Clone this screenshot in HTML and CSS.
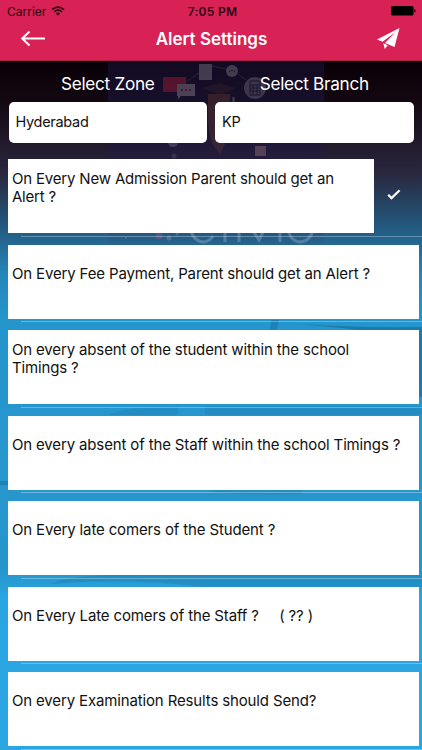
FILE: index.html
```html
<!DOCTYPE html>
<html lang="en">
<head>
  <meta charset="utf-8">
  <title>Alert Settings</title>
  <link rel="stylesheet" href="styles.css">
</head>
<body>
<div class="screen">
  <svg class="backdrop" viewBox="0 0 422 750" aria-hidden="true">
    <defs>
      <linearGradient id="night" x1="0" y1="0" x2="0" y2="1">
        <stop offset="0" stop-color="#120a22"/>
        <stop offset=".5" stop-color="#221b3e" stop-opacity=".7"/>
        <stop offset="1" stop-color="#262044" stop-opacity="0"/>
      </linearGradient>
    </defs>
    <rect x="108" y="61" width="216" height="190" fill="url(#night)"/>
    <!-- school artwork -->
    <g opacity=".4">
      <path d="M186 82l13-9M212 66l14 3M238 74l8 6" fill="none" stroke="#4a4068"/>
      <rect x="199" y="64" width="13" height="16" fill="#8a8490"/>
      <rect x="163" y="77" width="23" height="15" fill="#b81f35"/>
      <path d="M177 84h18v12h-14l-3 3v-3h-1z" fill="#9a8f9d"/>
      <path d="M181 90h10" stroke="#a81f35" stroke-width="2" stroke-dasharray="2 2"/>
      <circle cx="232" cy="71" r="6" fill="#8a8490"/>
      <path d="M229 72l3-2 3 2" fill="none" stroke="#332844"/>
      <circle cx="255" cy="88" r="11" fill="#77717f"/>
      <path d="M250 81h10v14h-10zM250 85h10M250 88h10M250 91h10M253 85v10M257 85v10" fill="none" stroke="#292033"/>
      <path d="M202 88l18-5 15 5-14 7z" fill="#38202c"/>
      <path d="M208 94h22v24q-3 32-11 32t-11-28z" fill="#60382f"/>
      <path d="M233.5 97v5" stroke="#88808c" stroke-width="2"/>
      <path d="M168 143h10q-1 4-5 4t-5-4z" fill="#777080"/>
      <rect x="255" y="146" width="11" height="10" fill="#a07b86"/>
      <circle cx="174" cy="156" r="2.5" fill="#5a536a"/>
      <path d="M214 143h11l-5 12z" fill="#5c3840"/>
    </g>
    <!-- lower edge of the logo -->
    <g fill="none" stroke="#b8cbe0" stroke-width="3" opacity=".3">
      <path d="M190 229q4 13 14 13q6-1 9-6M225 232v10M239 232v10M251 228l8 12 6-12M280 228v14M288 230q3 12 13 12q9-1 12-12"/>
      <circle cx="159" cy="236" r="3.5" fill="#c05b99" stroke="none"/>
      <circle cx="169" cy="238" r="2.5" fill="#b8a0ba" stroke="none"/>
      <circle cx="177" cy="234" r="1.5" fill="#b8a0ba" stroke="none"/>
      <circle cx="126" cy="238" r="1" fill="#b8a0ba" stroke="none"/>
    </g>
    <!-- soft shapes between the rows -->
    <g fill="#145f8f">
      <path d="M271 320h8l-2 10h-7z" opacity=".35"/>
      <path d="M280 323q70 5 142 4v70h-4v-67h-60q-30-4-78-7z" opacity=".5"/>
      <path d="M108 415q12-8 70-8v8zM205 406h217v9h-217z" opacity=".15"/>
      <path d="M0 481h8v4h-8z" opacity=".4"/>
      <path d="M211 490h90v4q-40 2-90-2z" opacity=".15"/>
      <path d="M50 584q20-9 70-9h302v12h-220q-70-9-152-3z" opacity=".22"/>
    </g>
  </svg>
  <header class="header">
    <div class="status-bar">
      <div class="carrier">
        <span>Carrier</span>
        <svg width="14" height="10" viewBox="0 0 14 10">
          <path d="M1 3.6q6-5 12 0M3.1 5.8q3.9-3.2 7.8 0" fill="none" stroke="#2a0712" stroke-width="1.6"/>
          <path d="M4.9 7.4q2.1-1.7 4.2 0L7 9.7z" fill="#2a0712"/>
        </svg>
      </div>
      <div class="clock">7:05 PM</div>
      <svg class="battery" width="25" height="10" viewBox="0 0 25 10">
        <rect width="22.5" height="9.6" rx="1.6"/>
        <path d="M23.3 3q1.3.3 1.3 1.8t-1.3 1.8z"/>
      </svg>
    </div>
    <nav class="nav-bar">
      <svg width="26" height="16" viewBox="0 0 26 16">
        <path d="M25 7.500H2.500M9.500 .5L2.200 7.500l7.300 7" fill="none" stroke="#fff" stroke-width="2"/>
      </svg>
      <h1 class="title">Alert Settings</h1>
      <svg width="23" height="22" viewBox="0 0 23 22" fill="#fff">
        <path d="M22.5 0L0 11.5l5.5 2.3L18.5 4.2 8 15l9.500 4z"/>
        <path d="M6.3 15.3l4.500 2-3 3.700z"/>
      </svg>
    </nav>
  </header>
  <div class="filters">
    <div class="filter">
      <div class="filter-label">Select Zone</div>
      <div class="filter-value">Hyderabad</div>
    </div>
    <div class="filter">
      <div class="filter-label">Select Branch</div>
      <div class="filter-value">KP</div>
    </div>
  </div>
  <div class="alerts">
    <div class="alert checked">
      <div class="card two-lines">On Every New Admission Parent should get an<br>Alert ?</div>
      <svg class="check" width="14" height="11" viewBox="0 0 14 11">
        <path d="M1.2 5.8l3.3 3.3L12.6 1.3" fill="none" stroke="#fff" stroke-width="2.2"/>
      </svg>
    </div>
    <div class="alert"><div class="card">On Every Fee Payment, Parent should get an Alert ?</div></div>
    <div class="alert"><div class="card two-lines">On every absent of the student within the school<br>Timings ?</div></div>
    <div class="alert"><div class="card">On every absent of the Staff within the school Timings ?</div></div>
    <div class="alert"><div class="card">On Every late comers of the Student ?</div></div>
    <div class="alert"><div class="card">On Every Late comers of the Staff ?&nbsp;&nbsp;&nbsp;&nbsp; ( ?? )</div></div>
    <div class="alert"><div class="card">On every Examination Results should Send?</div></div>
  </div>
</div>
</body>
</html>
```
FILE: styles.css
```css
body { margin: 0; font-family: Inter, "Liberation Sans", sans-serif; color: #111; }
svg { display: block; flex: none; }

.screen {
  position: relative;
  height: 750px;
  overflow: hidden;
  background: linear-gradient(#080006 61px, #130811 100px, #241c30 150px, #292940 175px, #235377 220px, #24658f 240px, #2487b9 275px, #2496cc 320px, #2796ce 480px, #2596cb 570px, #2ba5e2 600px, #2ba6e3 750px);
}

.backdrop { position: absolute; top: 0; left: 0; width: 422px; height: 750px; }
.header, .filters, .alerts { position: relative; }

.header { height: 61px; background: #d82256; border-bottom: 1px solid #b01c47; box-sizing: border-box; }

.status-bar {
  display: grid;
  grid-template-columns: 1fr auto 1fr;
  align-items: center;
  height: 22px;
  padding: 0 6px 0 7px;
  font-size: 12px;
  color: #2a0712;
}
.carrier { display: flex; align-items: center; gap: 5px; }
.clock { padding-left: 2px; font-weight: 600; letter-spacing: 0.3px; }
.battery { justify-self: end; }

.nav-bar {
  display: flex;
  align-items: center;
  justify-content: space-between;
  height: 33px;
  padding: 0 22px 0 20px;
}
.title { margin: 1px 0 0; font-size: 17px; font-weight: 600; color: #fff; }

.filters { display: flex; gap: 8px; height: 90px; padding: 0 8.5px; }
.filter { flex: 1; }
.filter-label {
  height: 41px;
  line-height: 45px;
  text-align: center;
  font-size: 17.2px;
  letter-spacing: -0.3px;
  color: #fff;
}
.filter-value {
  height: 41px;
  padding-left: 7px;
  line-height: 40px;
  font-size: 14.5px;
  letter-spacing: -0.3px;
  background: #fff;
  border-radius: 5px;
}

.alert {
  display: flex;
  height: 85.5px;
  padding: 8px 3.5px 0 8.4px;
  box-sizing: border-box;
  background: linear-gradient(rgba(255, 255, 255, 0.3), rgba(255, 255, 255, 0.3)) 21px 100% / 100% 1px no-repeat;
}
.card {
  flex: 1;
  height: 74px;
  padding: 20px 0 0 3.5px;
  box-sizing: border-box;
  line-height: 18.3px;
  font-size: 15px;
  letter-spacing: -0.14px;
  white-space: nowrap;
  background: #fff;
}
.two-lines { padding-top: 10.5px; }
.checked .card { flex: none; width: 365.5px; letter-spacing: -0.17px; }
.check { margin: 30px 0 0 13px; }
```
